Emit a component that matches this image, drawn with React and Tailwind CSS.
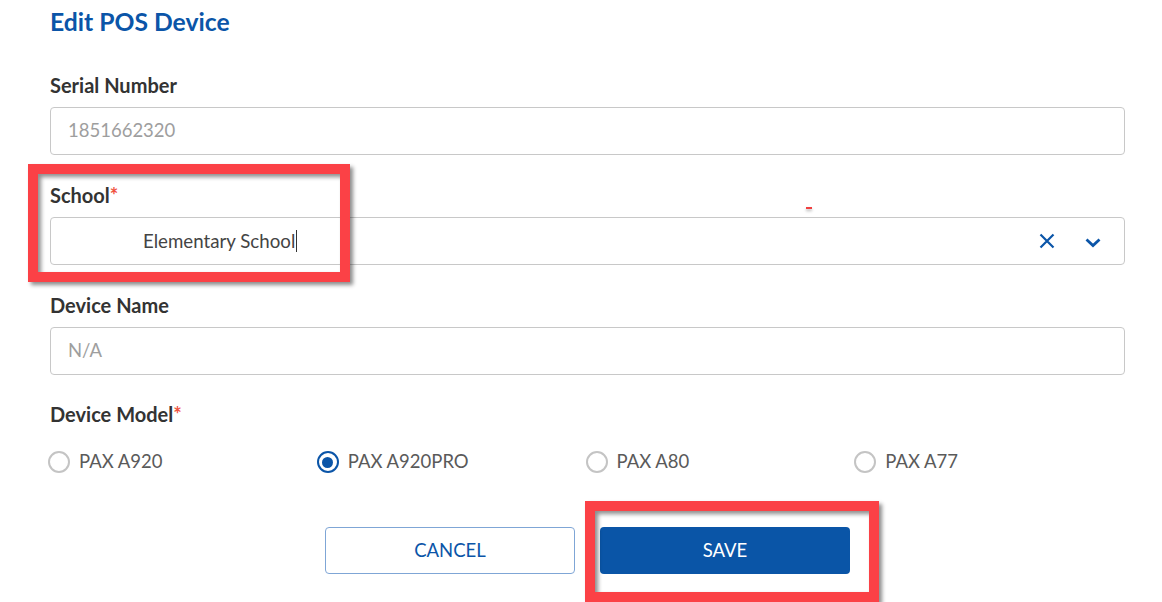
import React from 'react';

const Label = ({ children, required }) => (
  <div className="text-[20px] leading-[24px] font-bold text-[#333333]">
    {children}
    {required && <span className="text-[#f0533f]">*</span>}
  </div>
);

const Radio = ({ label, checked }) => (
  <label className="flex items-center gap-[9px] h-[24px] -ml-[2px]">
    {checked ? (
      <span className="w-[22px] h-[22px] rounded-full border-[2.5px] border-[#0b55a8] flex items-center justify-center">
        <span className="w-[11px] h-[11px] rounded-full bg-[#0b55a8]" />
      </span>
    ) : (
      <span className="w-[22px] h-[22px] rounded-full border-[2.5px] border-[#c4c4c4]" />
    )}
    <span className="text-[18.5px] text-[#5a5a5a]">{label}</span>
  </label>
);

const RedFrame = ({ className }) => (
  <div
    className={`absolute border-[10px] border-[#fb4146] shadow-[3px_3px_4px_rgba(0,0,0,0.45),inset_3px_3px_4px_rgba(0,0,0,0.45)] pointer-events-none ${className}`}
  />
);

export default function App() {
  const models = ['PAX A920', 'PAX A920PRO', 'PAX A80', 'PAX A77'];

  return (
    <div className="relative w-[1162px] h-[602px] overflow-hidden bg-white font-['Lato',sans-serif]">
      <div className="ml-[50px] w-[1075px] pt-[7px]">
        <h1 className="text-[24.7px] leading-[29px] font-bold text-[#0b55a8]">Edit POS Device</h1>

        <div className="mt-[37px]">
          <Label>Serial Number</Label>
          <div className="mt-[10px] h-[48px] rounded-[4px] border border-[#c8c8c8] flex items-center px-[17px]">
            <span className="text-[18.5px] text-[#9e9e9e]">1851662320</span>
          </div>
        </div>

        <div className="mt-[28px]">
          <Label required>School</Label>
          <div className="mt-[10px] h-[48px] rounded-[4px] border border-[#c8c8c8] flex items-center pl-[92px] pr-[23px]">
            <span className="text-[18.7px] text-[#444444]">Elementary School</span>
            <span className="ml-[1px] w-px h-[22px] bg-[#333333]" />
            <div className="ml-auto flex items-center gap-[30px]">
              <svg width="16" height="16" viewBox="0 0 16 16" fill="none">
                <path d="M1.5 1.5L14.5 14.5M14.5 1.5L1.5 14.5" stroke="#0b55a8" strokeWidth="2.2" />
              </svg>
              <svg width="16" height="10" viewBox="0 0 16 10" fill="none" className="mt-[3px]">
                <path d="M1.5 1.5L8 7.5L14.5 1.5" stroke="#0b55a8" strokeWidth="2.8" />
              </svg>
            </div>
          </div>
        </div>

        <div className="mt-[28px]">
          <Label>Device Name</Label>
          <div className="mt-[10px] h-[48px] rounded-[4px] border border-[#c8c8c8] flex items-center px-[17px]">
            <span className="text-[18.5px] text-[#9e9e9e]">N/A</span>
          </div>
        </div>

        <div className="mt-[27px]">
          <Label required>Device Model</Label>
          <div className="mt-[24px] grid grid-cols-4">
            {models.map((m) => (
              <Radio key={m} label={m} checked={m === 'PAX A920PRO'} />
            ))}
          </div>
        </div>

        <div className="mt-[53px] flex justify-center gap-[25px]">
          <button className="w-[250px] h-[47px] rounded-[4px] border border-[#7fa6d6] bg-white text-[18.5px] text-[#0b55a8]">
            CANCEL
          </button>
          <button className="w-[250px] h-[47px] rounded-[4px] bg-[#0a55a7] text-[18.5px] text-white">
            SAVE
          </button>
        </div>
      </div>

      <RedFrame className="left-[28px] top-[164px] w-[322px] h-[118px]" />
      <RedFrame className="left-[585px] top-[501px] w-[294px] h-[101px]" />
      <div className="absolute left-[806px] top-[207px] w-[6px] h-[2px] bg-[#f04040] shadow-[0_2px_3px_rgba(0,0,0,0.3)]" />
    </div>
  );
}
